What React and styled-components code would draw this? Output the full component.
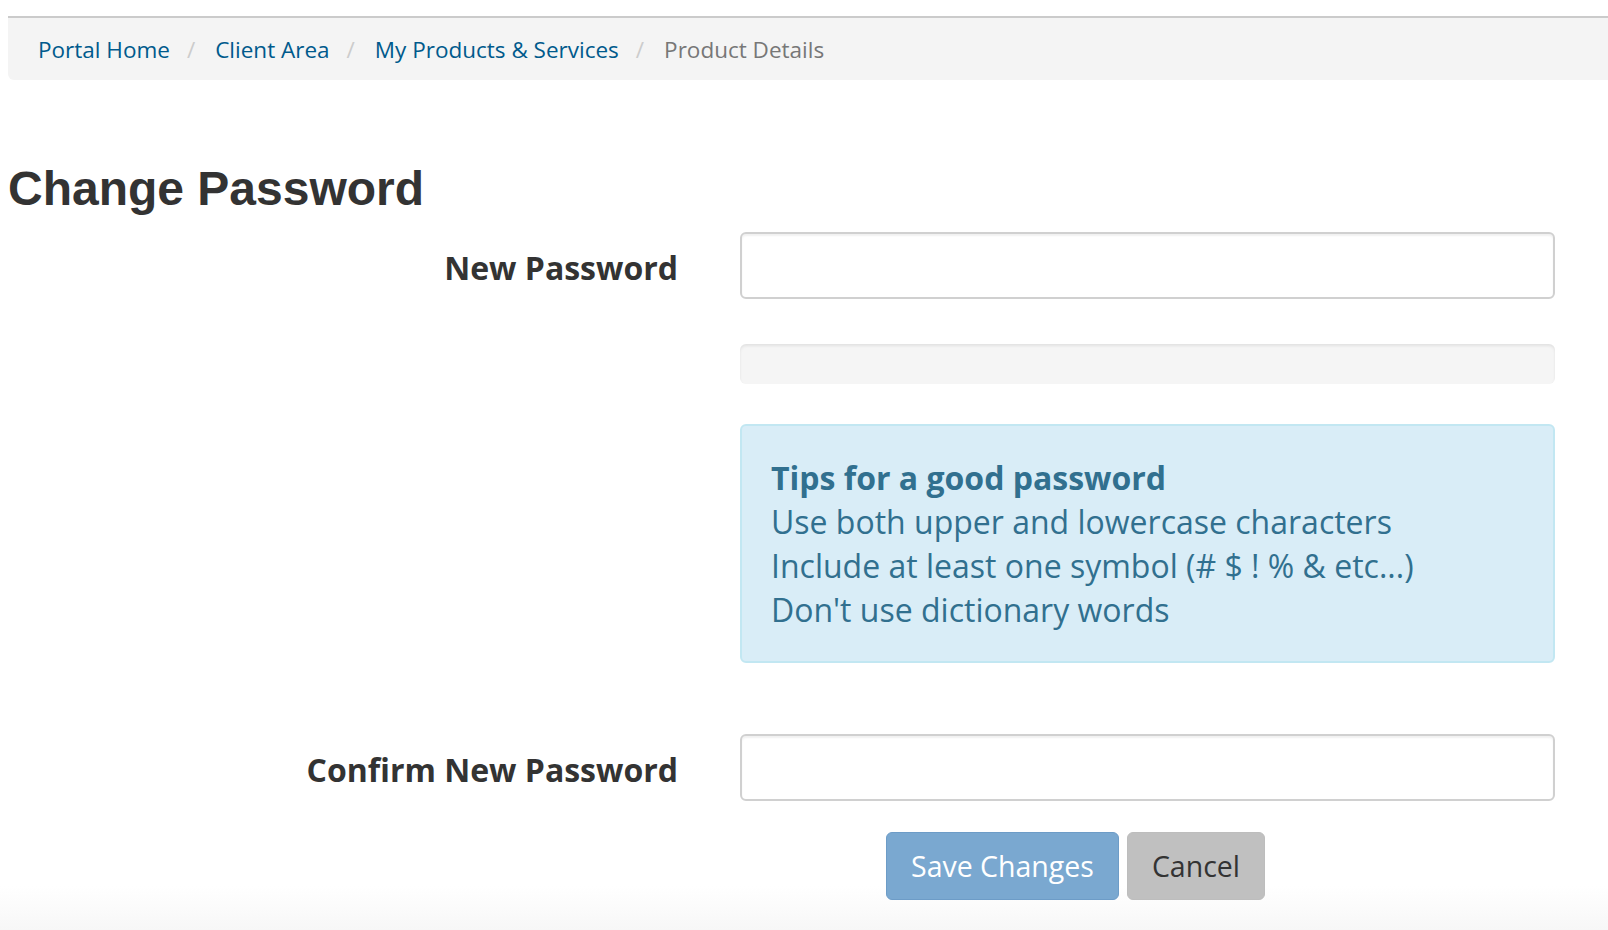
import React from "react";
import styled, { createGlobalStyle } from "styled-components";

const GlobalStyle = createGlobalStyle`
  html, body {
    margin: 0;
    padding: 0;
  }
  body {
    font-family: "Open Sans", "Liberation Sans", sans-serif;
    color: #333;
    background: #fff;
  }
  * {
    box-sizing: border-box;
  }
`;

const Page = styled.div`
  min-height: 930px;
  padding: 16px 0 0 8px;
  background: linear-gradient(to bottom, #fff 0, #fff 886px, #f7f7f7 930px);
  overflow: hidden;
`;

const Breadcrumb = styled.ol`
  display: flex;
  align-items: center;
  margin: 0;
  padding: 17px 30px 15px;
  list-style: none;
  background: #f4f4f4;
  border-top: 2px solid #cbcbcb;
  border-bottom-left-radius: 6px;
  font-size: 22.5px;
  line-height: 30px;
  white-space: nowrap;
`;

const Crumb = styled.li`
  color: ${(p) => (p.$active ? "#777" : "#005a8c")};

  &:not(:first-child)::before {
    content: "/";
    color: #ccc;
    padding: 0 20px 0 17px;
  }
`;

const Title = styled.h1`
  margin: 82px 0 17px;
  font-family: "Liberation Sans", Arial, sans-serif;
  font-size: 48px;
  font-weight: 700;
  line-height: 53px;
  color: #333;
`;

const Form = styled.form`
  display: flex;
  flex-direction: column;
`;

const FormRow = styled.div`
  display: grid;
  grid-template-columns: 670px 815px;
  column-gap: 62px;
  margin-top: ${(p) => p.$gap || 0}px;
`;

const Label = styled.label`
  height: 67px;
  padding-top: 3px;
  display: flex;
  align-items: center;
  justify-content: flex-end;
  font-size: 32px;
  font-weight: 700;
  color: #333;
`;

const Field = styled.div`
  display: flex;
  flex-direction: column;
`;

const Input = styled.input`
  height: 67px;
  width: 100%;
  padding: 0 18px;
  border: 2px solid #d0d0d0;
  border-radius: 6px;
  box-shadow: inset 0 2px 2px rgba(0, 0, 0, 0.06);
  font-family: inherit;
  font-size: 28px;
  color: #555;
  outline: none;
`;

const Strength = styled.div`
  height: 40px;
  margin-top: 45px;
  background: #f5f5f5;
  border-radius: 6px;
  box-shadow: inset 0 2px 3px rgba(0, 0, 0, 0.08);
`;

const Tips = styled.div`
  margin-top: 40px;
  padding: 30px 29px 29px;
  background: #d9edf7;
  border: 2px solid #c2e7f2;
  border-radius: 6px;
  color: #31708f;
  font-size: 32px;
  line-height: 44px;

  strong {
    display: block;
    font-weight: 700;
  }
`;

const Buttons = styled.div`
  display: flex;
  gap: 8px;
  margin-top: 31px;
  padding-left: 878px;
`;

const Button = styled.button`
  height: 68px;
  padding: 0 24px;
  border: 1px solid ${(p) => (p.$primary ? "#6d9cc7" : "#bdbdbd")};
  border-radius: 6px;
  background: ${(p) => (p.$primary ? "#7aa8d0" : "#c0c0c0")};
  color: ${(p) => (p.$primary ? "#fff" : "#333")};
  font-family: "Open Sans", sans-serif;
  font-size: 28.5px;
  cursor: pointer;
`;

const crumbs = [
  { label: "Portal Home" },
  { label: "Client Area" },
  { label: "My Products & Services" },
  { label: "Product Details", active: true },
];

export default function App() {
  return (
    <>
      <GlobalStyle />
      <Page>
        <Breadcrumb>
          {crumbs.map((c) => (
            <Crumb key={c.label} $active={c.active}>
              {c.label}
            </Crumb>
          ))}
        </Breadcrumb>

        <Title>Change Password</Title>

        <Form onSubmit={(e) => e.preventDefault()}>
          <FormRow>
            <Label htmlFor="newpw">New Password</Label>
            <Field>
              <Input id="newpw" type="password" />
              <Strength />
              <Tips>
                <strong>Tips for a good password</strong>
                Use both upper and lowercase characters
                <br />
                Include at least one symbol (# $ ! % &amp; etc...)
                <br />
                Don't use dictionary words
              </Tips>
            </Field>
          </FormRow>

          <FormRow $gap={71}>
            <Label htmlFor="confirmpw">Confirm New Password</Label>
            <Field>
              <Input id="confirmpw" type="password" />
            </Field>
          </FormRow>

          <Buttons>
            <Button type="submit" $primary>
              Save Changes
            </Button>
            <Button type="reset">Cancel</Button>
          </Buttons>
        </Form>
      </Page>
    </>
  );
}
